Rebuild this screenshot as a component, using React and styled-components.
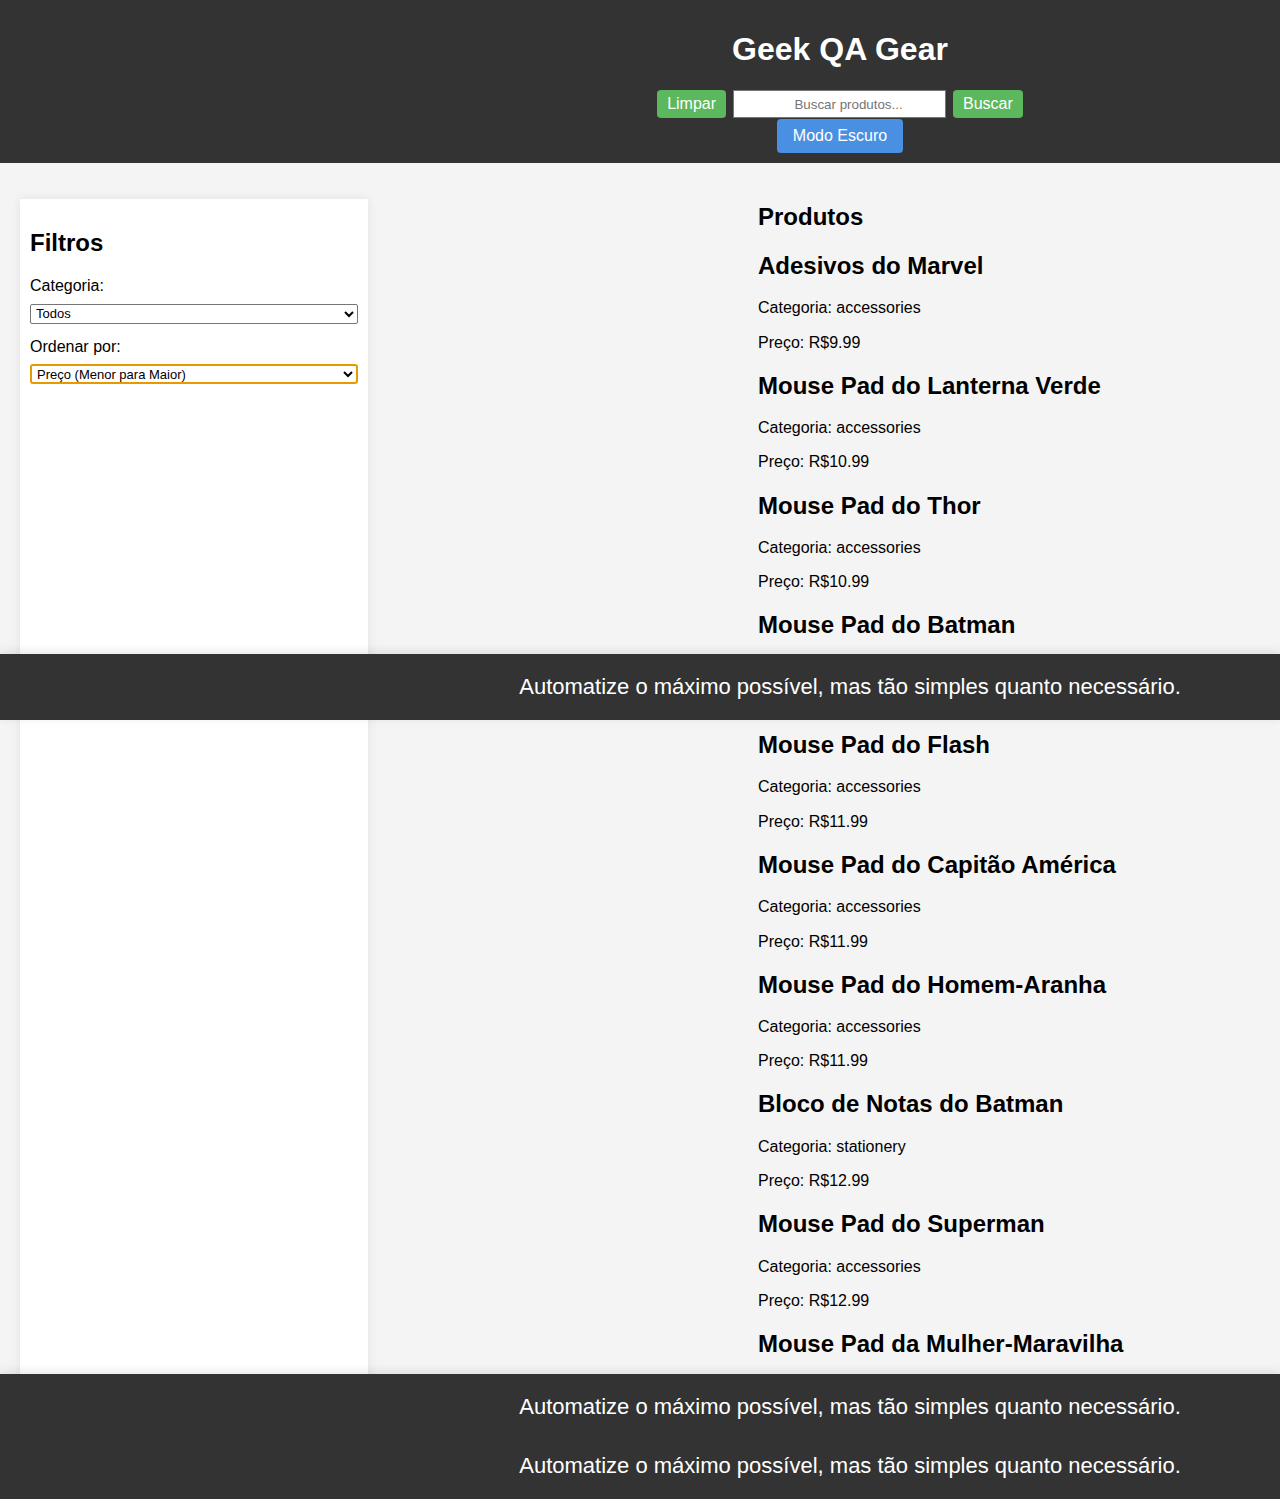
import React from 'react';
import styled, { createGlobalStyle } from 'styled-components';

const GlobalStyle = createGlobalStyle`
  body {
    margin: 0;
    font-family: "Liberation Sans", Arial, sans-serif;
    background-color: #f4f4f4;
    color: #000;
  }
`;

const Page = styled.div`
  position: relative;
  height: 1499px;
  overflow: hidden;
`;

const Header = styled.header`
  background-color: #333;
  color: #fff;
  padding: 10px 0 10px 400px;
  display: flex;
  flex-direction: column;
  align-items: center;
`;

const Title = styled.h1`
  font-size: 32px;
  line-height: 37px;
  margin: 21px 0 22px;
`;

const SearchRow = styled.div`
  display: flex;
  align-items: center;
  gap: 7px;
`;

const Button = styled.button`
  font-family: "Liberation Sans", Arial, sans-serif;
  font-size: 16px;
  line-height: 18px;
  color: #fff;
  border: none;
  border-radius: 4px;
  cursor: pointer;
  background-color: ${(p) => (p.$variant === 'blue' ? '#4a90e2' : '#5cb85c')};
  padding: ${(p) => (p.$variant === 'blue' ? '8px 16px' : '5px 10px')};
  margin-top: ${(p) => (p.$variant === 'blue' ? '1px' : '0')};
`;

const SearchInput = styled.input`
  box-sizing: border-box;
  width: 213px;
  height: 28px;
  border: 1px solid #767676;
  padding: 0 2px 0 20px;
  font-family: "Liberation Sans", Arial, sans-serif;
  font-size: 13.33px;
  text-align: center;
  background: #fff;
  &::placeholder {
    color: #757575;
  }
`;

const Main = styled.main`
  display: flex;
  align-items: stretch;
  padding: 20px 0 0 20px;
`;

const Sidebar = styled.aside`
  width: 328px;
  flex-shrink: 0;
  margin-top: 16px;
  padding: 10px;
  background-color: #fff;
  box-shadow: 0 0 10px rgba(0, 0, 0, 0.08);
`;

const Heading = styled.h2`
  font-size: 24px;
  line-height: 27.6px;
  margin: 19.7px 0;
`;

const SectionTitle = styled(Heading)`
  margin-bottom: ${(p) => (p.$aside ? '20.9px' : '21.7px')};
`;

const FilterLabel = styled.label`
  display: block;
  font-size: 16px;
  line-height: 18.4px;
  margin-bottom: 8px;
`;

const Select = styled.select`
  display: block;
  box-sizing: border-box;
  width: 100%;
  height: 20px;
  margin-bottom: 14px;
  font-family: "Liberation Sans", Arial, sans-serif;
  font-size: 13px;
  background: #fff;
  color: #000;
  border: ${(p) => (p.$focused ? '2px solid #e69a00' : '1px solid #767676')};
  border-radius: ${(p) => (p.$focused ? '3px' : '2px')};
  padding: 0 1px;
  outline: none;
`;

const Products = styled.section`
  flex: 1;
  padding-left: 390px;
`;

const ProductInfo = styled.p`
  font-size: 16px;
  line-height: 18.4px;
  margin: 16px 0;
`;

const Footer = styled.footer`
  position: absolute;
  left: 0;
  right: 0;
  background-color: #333;
  color: #fff;
  padding: 20px 0 0 420px;
  text-align: center;
  box-shadow: 0 -2px 10px rgba(0, 0, 0, 0.1);
  top: ${(p) => (p.$bottom ? 'auto' : '654px')};
  bottom: ${(p) => (p.$bottom ? '0' : 'auto')};
  height: ${(p) => (p.$bottom ? '105px' : '46px')};
`;

const FooterText = styled.p`
  font-size: 22px;
  line-height: 25px;
  margin: 0 0 34px;
`;

const products = [
  { name: 'Adesivos do Marvel', category: 'accessories', price: '9.99' },
  { name: 'Mouse Pad do Lanterna Verde', category: 'accessories', price: '10.99' },
  { name: 'Mouse Pad do Thor', category: 'accessories', price: '10.99' },
  { name: 'Mouse Pad do Batman', category: 'accessories', price: '10.99' },
  { name: 'Mouse Pad do Flash', category: 'accessories', price: '11.99' },
  { name: 'Mouse Pad do Capitão América', category: 'accessories', price: '11.99' },
  { name: 'Mouse Pad do Homem-Aranha', category: 'accessories', price: '11.99' },
  { name: 'Bloco de Notas do Batman', category: 'stationery', price: '12.99' },
  { name: 'Mouse Pad do Superman', category: 'accessories', price: '12.99' },
  { name: 'Mouse Pad da Mulher-Maravilha', category: 'accessories', price: '12.99' },
];

const quote = 'Automatize o máximo possível, mas tão simples quanto necessário.';

const App = () => {
  return (
    <Page>
      <GlobalStyle />
      <Header>
        <Title>Geek QA Gear</Title>
        <SearchRow>
          <Button>Limpar</Button>
          <SearchInput placeholder="Buscar produtos..." />
          <Button>Buscar</Button>
        </SearchRow>
        <Button $variant="blue">Modo Escuro</Button>
      </Header>

      <Main>
        <Sidebar>
          <SectionTitle $aside>Filtros</SectionTitle>
          <FilterLabel>Categoria:</FilterLabel>
          <Select defaultValue="all">
            <option value="all">Todos</option>
            <option value="accessories">accessories</option>
            <option value="stationery">stationery</option>
          </Select>
          <FilterLabel>Ordenar por:</FilterLabel>
          <Select $focused defaultValue="price-asc">
            <option value="price-asc">Preço (Menor para Maior)</option>
            <option value="price-desc">Preço (Maior para Menor)</option>
          </Select>
        </Sidebar>

        <Products>
          <SectionTitle>Produtos</SectionTitle>
          {products.map((p) => (
            <div key={p.name}>
              <Heading>{p.name}</Heading>
              <ProductInfo>Categoria: {p.category}</ProductInfo>
              <ProductInfo>Preço: R${p.price}</ProductInfo>
            </div>
          ))}
        </Products>
      </Main>

      <Footer>
        <FooterText>{quote}</FooterText>
      </Footer>
      <Footer $bottom>
        <FooterText>{quote}</FooterText>
        <FooterText>{quote}</FooterText>
      </Footer>
    </Page>
  );
};

export default App;
